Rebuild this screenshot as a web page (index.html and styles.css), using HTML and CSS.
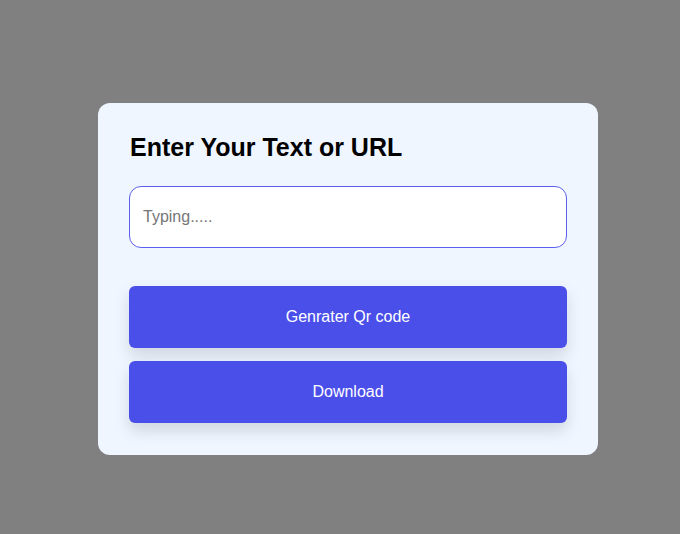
FILE: index.html
```html
<!DOCTYPE html>
<html>
<head>
<meta charset="utf-8">
<link rel="stylesheet" href="styles.css">
</head>
<body>
<div class="card">
  <h2 class="title">Enter Your Text or URL</h2>
  <input class="field" type="text" placeholder="Typing.....">
  <div class="actions">
    <button class="btn">Genrater Qr code</button>
    <button class="btn">Download</button>
  </div>
</div>
</body>
</html>
```

FILE: styles.css
```css
html, body {
  margin: 0;
  padding: 0;
  background: #808080;
  font-family: "Liberation Sans", Arial, sans-serif;
}
body {
  padding: 103px 0 0 98px;
  height: 534px;
  box-sizing: border-box;
}
.card {
  width: 500px;
  box-sizing: border-box;
  background: #eff6ff;
  border-radius: 12px;
  padding: 30px 31px 32px 31px;
}
.title {
  margin: 0 0 25px 1px;
  font-size: 25px;
  font-weight: 700;
  line-height: 28px;
  color: #000;
}
.field {
  display: block;
  width: 100%;
  box-sizing: border-box;
  height: 62px;
  border: 1px solid #5b5ff0;
  border-radius: 12px;
  padding: 0 13px;
  font-family: "Liberation Sans", Arial, sans-serif;
  font-size: 16px;
  background: #fff;
  outline: none;
}
.field::placeholder {
  color: #767676;
}
.actions {
  margin-top: 38px;
  display: flex;
  flex-direction: column;
  gap: 13px;
}
.btn {
  height: 62px;
  border: none;
  border-radius: 6px;
  background: #4a4fea;
  color: #fff;
  font-family: "Liberation Sans", Arial, sans-serif;
  font-size: 16px;
  box-shadow: 0 8px 16px 0 rgba(0, 0, 0, 0.13);
  cursor: pointer;
}
```
